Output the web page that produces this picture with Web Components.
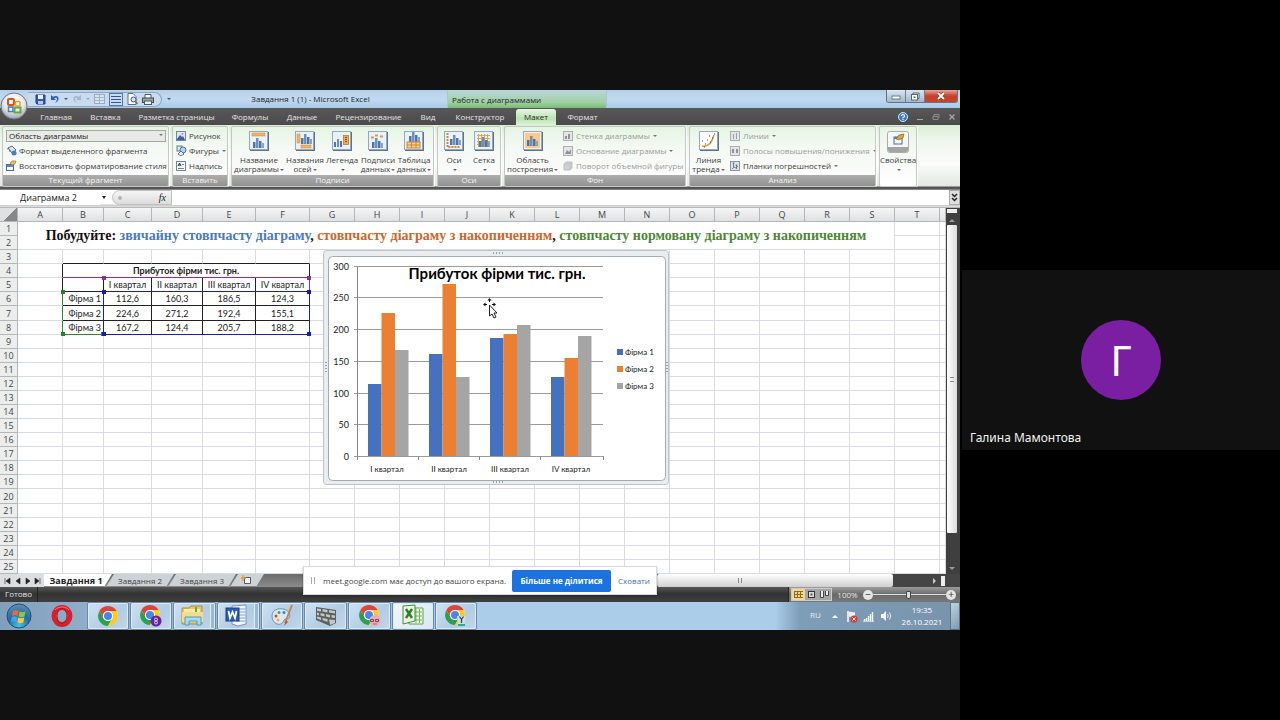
<!DOCTYPE html>
<html lang="uk">
<head>
<meta charset="utf-8">
<title>Завдання 1 (1) - Microsoft Excel</title>
<style>
html, body { margin: 0; height: 100%; background: #000; }
body { font-family: "Open Sans", "Noto Sans", sans-serif; font-size: 8px; overflow: hidden; }
</style>
</head>
<body>
<meet-call></meet-call>
<script>
const RESET = `
*, *::before, *::after { box-sizing: border-box; }
:host { display: block; box-sizing: border-box; }
button, input, select { font: inherit; color: inherit; margin: 0; padding: 0; border: 0; background: none; outline: 0; }
a { color: inherit; text-decoration: none; }
`;
function component(name, css, render) {
  customElements.define(name, class extends HTMLElement {
    constructor() {
      super();
      this.attachShadow({ mode: "open" });
    }
    connectedCallback() {
      this.shadowRoot.innerHTML = `<style>${RESET}${css}</style>${render(this)}`;
    }
  });
}

/* ---------- icons ---------- */
const frame = (inner, fill = "#e9f1fb") =>
  `<rect x="1" y="1" width="19" height="19" fill="#5f7388"/><rect x="0.5" y="0.5" width="18" height="18" fill="${fill}" stroke="#93a9c0"/>${inner}`;
const bars = (x, y) =>
  `<rect x="${x}" y="${y + 4}" width="2.5" height="6" fill="#4f74a8"/><rect x="${x + 3}" y="${y}" width="2.5" height="10" fill="#6c8fc0"/><rect x="${x + 6}" y="${y + 3}" width="2.5" height="7" fill="#4f74a8"/><rect x="${x + 9}" y="${y + 5}" width="2" height="5" fill="#86a3cc"/>`;
const grayThumb = inner => `<rect x="0.5" y="0.5" width="9" height="9" fill="#e4e6e8" stroke="#a9adb2"/>${inner}`;
const chrome = `<circle cx="11" cy="11" r="10" fill="#fff"/><path d="M2.34 6A10 10 0 0 1 19.66 6H11A5 5 0 0 0 6.6 13.4Z" fill="#dc4638"/><path d="M2.34 6A10 10 0 0 0 11 21L15.3 13.5A5 5 0 0 1 6.7 13.5Z" fill="#2e9f4f"/><path d="M19.66 6A10 10 0 0 1 11 21L15.3 13.5A5 5 0 0 0 11 6Z" fill="#fbcb1e"/><circle cx="11" cy="11" r="5" fill="#fff"/><circle cx="11" cy="11" r="4" fill="#4a86e8"/>`;
const ICONS = {
  office: [28, 28, `<defs><radialGradient id="g" cx=".5" cy=".3" r=".7"><stop offset="0" stop-color="#fff"/><stop offset=".6" stop-color="#e3e6ea"/><stop offset="1" stop-color="#9da4ac"/></radialGradient></defs><circle cx="14" cy="14" r="13" fill="url(#g)" stroke="#6f757c"/><rect x="8" y="7" width="6" height="6" rx="1" fill="none" stroke="#d9531e" stroke-width="2"/><rect x="15.500" y="9.500" width="4.500" height="4.500" rx="1" fill="#fff" stroke="#f0a21c" stroke-width="1.500"/><rect x="8.500" y="15" width="4.500" height="4.500" fill="#fff" stroke="#3d7cc9" stroke-width="1.500"/><rect x="14.500" y="15.500" width="6" height="5" fill="none" stroke="#67a93b" stroke-width="2"/>`],
  save: [11, 11, `<path d="M1 1h9v9H2L1 9Z" fill="#3a56a8" stroke="#223a80"/><rect x="3" y="1" width="5" height="4" fill="#e8eefc"/><rect x="3" y="7" width="5" height="3" fill="#b8c6ea"/>`],
  undo: [10, 10, `<path d="M1 1v5h5L4 4.300C7 2.500 8.500 5 5 9 10.500 6.500 9.500 0 3 2.800Z" fill="#2f5cc0"/>`],
  redo: [10, 10, `<path d="M9 1v5H4L6 4.300C3 2.500 1.500 5 5 9-.5 6.500.5 0 7 2.800Z" fill="#a3b6cb"/>`],
  table: [11, 10, `<rect x=".5" y=".5" width="10" height="9" fill="#dbe3ec" stroke="#9aabbd"/><path d="M1 3.500h9M1 6.500h9M5.500 1v8" stroke="#a5b4c6"/>`],
  lines: [14, 13, `<rect x=".5" y=".5" width="13" height="12" fill="#c7dbf1" stroke="#56779f"/><path d="M2 3.500h10M2 6.500h10M2 9.500h10" stroke="#35568d"/>`],
  preview: [11, 12, `<path d="M1 .5h5l3 3v8H1Z" fill="#fff" stroke="#5c6f86"/><circle cx="6.500" cy="6.500" r="2.500" fill="#cfe3f3" stroke="#3d5876"/><path d="M8.500 8.500 10.500 11" stroke="#9a6a2e" stroke-width="1.500"/>`],
  print: [12, 11, `<path d="M3 4V.500h6V4" fill="#fff" stroke="#4d5966"/><rect x=".5" y="4" width="11" height="4.500" fill="#9aa5b0" stroke="#3f4953"/><rect x="2.500" y="7" width="7" height="3.500" fill="#f3f3e2" stroke="#4d5966"/>`],
  help: [10, 10, `<circle cx="5" cy="5" r="4.500" fill="#3a78d6" stroke="#d4e4fa"/><path d="M3.500 4A1.500 1.500 0 1 1 5 5.500V6.300M5 7v1" fill="none" stroke="#fff" stroke-width="1.200"/>`],
  min: [8, 8, `<path d="M1 6.500h6" stroke="#a9a9a9"/>`],
  restore: [8, 8, `<path d="M1 3.500h5v3H1ZM2 3V1.500h5V5" fill="none" stroke="#8c8c8c"/>`],
  close: [8, 8, `<path d="m1.500 1.500 5 5m0-5-5 5" stroke="#a9a9a9" stroke-width="1.200"/>`],
  wmin: [10, 8, `<rect x="1" y="4" width="8" height="3" fill="#fff" stroke="#66788c"/>`],
  wmax: [10, 9, `<path d="M3 2.500V1h6v5.500H7.500" fill="#fff" stroke="#52657a"/><rect x="1.500" y="2.500" width="6" height="5.500" fill="#fff" stroke="#52657a"/><rect x="3.500" y="4.500" width="2" height="1.500" fill="#52657a"/>`],
  wclose: [10, 8, `<path d="m2 1 6 6m0-6L2 7" stroke="#7d2418" stroke-width="3"/><path d="m2 1 6 6m0-6L2 7" stroke="#fff" stroke-width="2"/>`],
  title: [20, 20, frame(`<rect x="3" y="2" width="13" height="3" fill="#f1b45c" stroke="#c98b36" stroke-width=".5"/>${bars(4, 7)}`)],
  axisTitle: [20, 20, frame(`<rect x="2" y="3" width="3" height="9" fill="#f1b45c" stroke="#c98b36" stroke-width=".5"/><rect x="6" y="14" width="10" height="3" fill="#f1b45c" stroke="#c98b36" stroke-width=".5"/>${bars(6, 3)}`)],
  legend: [20, 20, frame(`<g transform="translate(-2 2)"><rect x="4" y="9" width="2" height="5" fill="#4f74a8"/><rect x="7" y="6" width="2" height="8" fill="#6c8fc0"/><rect x="10" y="8" width="2" height="6" fill="#4f74a8"/></g><rect x="11.500" y="4.500" width="5" height="9" fill="#f1a952" stroke="#c07a28" stroke-width=".8"/><path d="M13 6.500h2M13 8.500h2M13 10.500h2" stroke="#7d4d14"/>`)],
  dataLabel: [20, 20, frame(`${bars(4, 7)}<path d="M3 6.500h3M7 4.500h3M12 5.500h3" stroke="#e09a3c" stroke-width="2"/>`)],
  dataTable: [20, 20, frame(`${bars(5, 1)}<rect x="3" y="11" width="13" height="6" fill="#f8cf8e" stroke="#c98b36"/><path d="M3 14h13M7.500 11v6M12 11v6" stroke="#c98b36"/>`)],
  axes: [20, 20, frame(`<path d="M3.500 2v14h13" fill="none" stroke="#d08a2c" stroke-width="2" stroke-dasharray="2 1"/>${bars(6, 4)}`)],
  grid: [20, 20, frame(`<path d="M3 4.500h13M3 7.500h13M3 10.500h13M3 13.500h13M4.500 3v13M7.500 3v13M10.500 3v13M13.500 3v13" stroke="#e0a64c"/>${bars(5, 6)}`)],
  plotArea: [20, 20, frame(`<rect x="2" y="2" width="15" height="15" fill="#f9cb86"/>${bars(4, 5)}`)],
  trend: [20, 20, frame(`<path d="M3 15C9 16 13 12 15 4" fill="none" stroke="#e3923a" stroke-width="1.500"/><path d="M3 10h1M6 13h1M8 9h1M11 11h1M13 7h1M10 5h1M15 3h1M5 16h1" stroke="#4a4a4a" stroke-width="1.200"/>`, "#fff")],
  props: [22, 22, `<rect x=".5" y=".5" width="21" height="21" rx="2" fill="#f6f8f6" stroke="#a9adaa"/><path d="M1 16h20v3a2 2 0 0 1-2 2H3a2 2 0 0 1-2-2Z" fill="#a2a5a3"/><rect x="7" y="6" width="8" height="7" fill="#fff" stroke="#4d6b8c"/><rect x="7" y="6" width="8" height="2" fill="#4f7fc2"/><path d="m9 8 3-4 5-1-1 4-4 2Z" fill="#d7a83a" stroke="#6b5a14" stroke-width=".6"/>`],
  format: [11, 11, `<path d="m2 3 4-2 4 4-4 3Z" fill="#dfe9f5" stroke="#4c6e98"/><path d="M1 4c2-1 3 0 3 3" fill="none" stroke="#4c6e98"/><circle cx="8" cy="8" r="2.500" fill="#4b7dc6"/>`],
  resetStyle: [11, 11, `<rect x=".5" y="4.500" width="7" height="6" fill="#fff" stroke="#43699a"/><rect x="1" y="5" width="6" height="2" fill="#5a8bd0"/><path d="M4 3 6 1h4L9 4 6 5Z" fill="#f0c04c" stroke="#9a7320" stroke-width=".6"/>`],
  picture: [10, 10, `<rect x=".5" y=".5" width="9" height="9" fill="#d7e6f8" stroke="#7087a5"/><path d="m1 8 3-4 2 2 1-1 2 4H1Z" fill="#3e5f8f"/><circle cx="6.500" cy="3" r="1" fill="#e98e3c"/>`],
  shapes: [11, 11, `<rect x="1" y="1" width="5" height="5" fill="#dbe7f6" stroke="#5d7ba3"/><circle cx="7" cy="5" r="3" fill="#b9d1ee" stroke="#4d71a4"/><path d="m5 6 3 3-3 2-3-2Z" fill="#e9f1fb" stroke="#4d71a4"/>`],
  textbox: [10, 10, `<rect x=".5" y=".5" width="9" height="9" fill="#f4f8fd" stroke="#7087a5"/><path d="m2 5 1.500-3L5 5M2.500 4h2" fill="none" stroke="#24344d"/><path d="M6 3.500h2M2 7.500h6" stroke="#7087a5"/>`],
  wall: [10, 10, grayThumb(`<path d="M2 8V5h2v3ZM5 8V3h2v5Z" fill="#8d9196"/>`)],
  floor: [10, 10, grayThumb(`<path d="M2 8 4 4l2 2 2-3v5Z" fill="#8d9196"/>`)],
  cube: [10, 10, `<path d="m1 3 2-2h6v6L7 9H1Z" fill="#cfd2d4" stroke="#b1b4b7" stroke-width=".8"/><path d="M1 3h6v6M7 3l2-2" fill="none" stroke="#bcbfc2" stroke-width=".8"/>`],
  linesG: [10, 10, grayThumb(`<path d="M3.500 8V3M6.500 8V2" stroke="#9b9fa3"/>`)],
  updown: [10, 10, grayThumb(`<rect x="2" y="3" width="2" height="4" fill="#8f9398"/><rect x="6" y="3" width="2" height="4" fill="#8f9398"/>`)],
  error: [10, 10, `<rect x=".5" y=".5" width="9" height="9" fill="#dde3ea" stroke="#8a97a6"/><path d="M3.500 2v4M2.500 2h2M6.500 4v4M5.500 4h2M2 8l2-2 2 1 2-2" fill="none" stroke="#5c6773" stroke-width=".8"/>`],
  newSheet: [12, 10, `<path d="M3.500 2.500h6v6h-6Z" fill="#fff" stroke="#4a5f7c"/><path d="M2 0v6M0 3h5" stroke="#e3a02c" stroke-width="1.500"/>`],
  start: [28, 28, `<defs><radialGradient id="s" cx=".5" cy=".9" r=".9"><stop offset="0" stop-color="#49c4ea"/><stop offset=".5" stop-color="#1f6da6"/><stop offset="1" stop-color="#5f8eb4"/></radialGradient></defs><circle cx="14" cy="14" r="12" fill="url(#s)" stroke="#244e70"/><path d="M8 9c2-1 4-1 5.500.200L12.500 14C11 13 9 13 7 14Z" fill="#ee6a33"/><path d="M14.500 9.500c2 1 4 1 6 0l-1 5c-2 1-4 1-6-.2Z" fill="#95c43d"/><path d="M6.800 15c2-1 4-1 5.500.2l-1 4.800c-1.500-1-3.500-1-5.500 0Z" fill="#4ba0e0"/><path d="M13.300 15.500c2 1 4 1 6 0l-1 5c-2 1-4 1-6-.2Z" fill="#fbc93c"/>`],
  opera: [22, 22, `<ellipse cx="11" cy="11" rx="8" ry="8.500" fill="none" stroke="#d8202c" stroke-width="5"/><ellipse cx="11" cy="11" rx="5" ry="7.500" fill="none" stroke="#b41420" stroke-width="1"/><path d="M4 5c3-4 11-4 14 0" fill="none" stroke="#f0767c" stroke-width="1"/>`],
  chrome: [22, 22, chrome],
  chromeS: [24, 24, `${chrome}<circle cx="17" cy="17" r="5.500" fill="#6a1f9c"/><circle cx="17" cy="15.500" r="1.500" fill="none" stroke="#e4d0f0"/><circle cx="17" cy="18.500" r="1.500" fill="none" stroke="#e4d0f0"/>`],
  chromeP: [24, 24, `${chrome}<circle cx="17" cy="16.500" r="5.500" fill="#f0a9b8"/><path d="M12.500 15.500h3v2h-3ZM17.500 15.500h3v2h-3Z" fill="none" stroke="#4d333a" stroke-width=".8"/><path d="M15 20h4" stroke="#c95a70"/>`],
  chromeY: [24, 24, `${chrome}<path d="M13 12h9l-1 8h-7Z" fill="#c8dde6"/><path d="m15.500 12.500 2 3 2-3M17.500 15v4" fill="none" stroke="#3d3a38" stroke-width="1.200"/><path d="M14 20h7v2h-7Z" fill="#2ea6a0"/>`],
  folder: [24, 24, `<path d="M1 4h7l2-2h11v18H1Z" fill="#e5c565" stroke="#b18f38"/><path d="M3 5h16v9H3Z" fill="#f8eaa8"/><path d="M14 3h2v6h-2Z" fill="#62a65a"/><path d="M1 8h21v10H1Z" fill="#f5dc88"/><path d="M4 13h16v8h-4v-4H8v4H4Z" fill="#a7dbf2" stroke="#4d9cc2"/>`],
  word: [24, 24, `<path d="M7 2 21 1v19l-8 2-6-2Z" fill="#f3f6fb" stroke="#7e95b5"/><path d="M14 5h6M14 8h6M14 11h6M14 14h6M11 17h9" stroke="#7fa0d0"/><rect x="1" y="4" width="13" height="13" fill="#2b5fae" stroke="#17407e"/><path d="m3.500 7 1.500 7 2.500-6L10 14l1.500-7" fill="none" stroke="#fff" stroke-width="1.800"/>`],
  paint: [24, 24, `<path d="M2 12C2 6 8 4 13 5c6 1 8 6 6 9-2 2-4 0-5 2-1 3-3 5-7 4-3-1-5-4-5-8Z" fill="#dbe9f4" stroke="#6c93b8"/><circle cx="6" cy="12" r="1.500" fill="#d8442f"/><circle cx="9" cy="8.500" r="1.500" fill="#4da64a"/><circle cx="14" cy="8.500" r="1.500" fill="#3f7cd0"/><circle cx="8" cy="16" r="1.500" fill="#f0b63a"/><path d="M22 1 15 19" stroke="#c98446" stroke-width="2"/><path d="m16 16-2 6 4-4Z" fill="#b2603a"/>`],
  bricks: [24, 24, `<path d="m2 3 20 3v13l-6 3-14-6Z" fill="#5b5f5e"/><path d="m3 4.500 4 .500v2.500l-4-.5ZM8.500 5l5 1v2.500l-5-1ZM15 6l6 1v2.500l-6-1ZM3 8.500l2 .5v2.500l-2-.5ZM6.500 9l4 1v2.500l-4-1ZM12 10l4 1v2.500l-4-1ZM17.500 11l3.500.5V14l-3.500-.5ZM3 12.500l4 1V16l-4-1.500ZM8.500 14l5 1v3l-5-2ZM15 15.500l6 .5v3l-5 2Z" fill="#c3c8c4"/>`],
  excel: [24, 24, `<path d="M8 4h14v16H8Z" fill="#f5fbf2" stroke="#5f9f4d"/><path d="M10 8h11M10 12h11M10 16h11M15 5v14M18.500 5v14" stroke="#6fb35b"/><path d="M2 2 14 1v16L2 20Z" fill="#e9f6e4" stroke="#3f8f34"/><path d="m5 5 6 9M11 5l-6 9" stroke="#2d8126" stroke-width="2.500"/>`],
  flag: [12, 13, `<path d="M2 1v11" stroke="#fff" stroke-width="1.500"/><path d="M3 2c2-1 4 1 6 0v5c-2 1-4-1-6 0Z" fill="#e9eff3"/><circle cx="8" cy="9" r="3.500" fill="#d63b2d"/><path d="m6.500 7.500 3 3m0-3-3 3" stroke="#fff"/>`],
  signal: [12, 11, `<path d="M1.500 10V8M3.500 10V7M5.500 10V5M7.500 10V3M9.500 10V1" stroke="#fff" stroke-width="1.400"/><path d="M0 10.500h11" stroke="#dce6ee" stroke-width=".8"/>`],
  sound: [12, 12, `<path d="M1 4h2l3-3v10L3 8H1Z" fill="#fff"/><path d="M7.500 4q1.500 2 0 4M9.500 2.500q2.500 3.500 0 7" fill="none" stroke="#e6eef4"/>`],
  move: [14, 22, `<path d="M6.500 1v3M6.500 9v3M1 6.500h3M9 6.500h3" stroke="#000"/><path d="m6.500 0 2 2.500h-4ZM0 6.500 2.500 4.500v4ZM13 6.500l-2.500-2v4Z" fill="#111"/><path d="M6.500 7v11l2.500-2 2 4 2-1-2-4h3Z" fill="#fff" stroke="#222"/>`]
};
component("ui-icon", `:host { display: inline-block; flex: none; line-height: 0; } svg { display: block; }`, el => {
  const [w, h, body] = ICONS[el.getAttribute("name")];
  return `<svg width="${w}" height="${h}" viewBox="0 0 ${w} ${h}" aria-hidden="true">${body}</svg>`;
});
const icon = n => `<ui-icon name="${n}"></ui-icon>`;

/* ---------- call layout ---------- */
component("meet-call", `
:host { display: grid; grid-template-columns: 3fr 1fr; min-height: 100vh; align-items: stretch; }
main { background: #111; display: flex; flex-direction: column; justify-content: center; min-width: 0; }
aside { background: #000; display: flex; flex-direction: column; justify-content: center; padding-left: 2px; min-width: 0; }
`, () => `<main><shared-screen></shared-screen></main><aside><participant-tile initial="Г">Галина Мамонтова</participant-tile></aside>`);

component("participant-tile", `
:host { display: grid; grid-template-rows: 1fr auto 1fr; justify-items: center; height: 180px; background: #111; color: #f1f1f1; }
.avatar { grid-row: 2; width: 80px; height: 80px; border-radius: 50%; background: #7b1fa2; color: #fff; font: 42px/80px "Noto Sans", sans-serif; text-align: center; }
.name { grid-row: 3; justify-self: start; align-self: end; padding: 0 8px 3px; font: 12px/18px "Noto Sans", sans-serif; }
`, el => `<div class="avatar">${el.getAttribute("initial")}</div><div class="name"><slot></slot></div>`);

component("shared-screen", `:host { position: relative; background: #555; color: #333; overflow: hidden; }`, () => `
<title-bar></title-bar><ribbon-tabs></ribbon-tabs><ribbon-bar></ribbon-bar><formula-bar></formula-bar>
<sheet-view></sheet-view><sheet-tabs></sheet-tabs><status-bar></status-bar><task-bar></task-bar><share-notice></share-notice>`);

/* ---------- title bar ---------- */
component("title-bar", `
:host { height: 18px; display: flex; align-items: center; position: relative; background: linear-gradient(#b3cfea, #c2daf0 50%, #a9cae8); color: #222; }
.office { position: absolute; left: 0; top: 2px; z-index: 2; }
.qat { margin-left: 28px; width: 134px; height: 15px; padding-left: 7px; display: flex; align-items: center; gap: 4px; border: 1px solid #8fa6be; border-left: 0; border-radius: 0 8px 8px 0; background: #c9dcef; }
.caret { width: 0; border: 2px solid transparent; border-top: 2px solid #46586d; border-bottom: 0; }
.more { margin-left: 5px; }
h1 { margin: 0; font: 8px/18px "Open Sans", sans-serif; width: 276px; padding-left: 3px; text-align: center; white-space: nowrap; }
.context { width: 160px; align-self: stretch; padding-left: 4px; line-height: 19px; background: linear-gradient(#bad6dc, #9fd0a2 70%, #79bb73); border-left: 1px solid #a9c8c8; border-right: 1px solid #a9c8c8; }
.win { margin-left: auto; margin-right: 2px; align-self: flex-start; display: flex; border: 1px solid #5f7589; border-top: 0; border-radius: 0 0 3px 3px; overflow: hidden; }
.win button { height: 12px; width: 19px; display: grid; place-items: center; background: linear-gradient(#d9e6f2, #a3b8cc); border-right: 1px solid #6d8195; }
.win button:last-child { width: 32px; border: 0; background: linear-gradient(#e5a79c, #c63f2a 50%, #c9422e); }
`, () => `<button class="office" aria-label="Office">${icon("office")}</button>
<div class="qat">${["save", "undo"].map(icon).join("")}<i class="caret"></i>${icon("redo")}<i class="caret" style="opacity:.4"></i>${["table", "lines", "preview", "print"].map(icon).join("")}</div>
<i class="caret more"></i><h1>Завдання 1 (1) - Microsoft Excel</h1><div class="context">Работа с диаграммами</div>
<div class="win"><button aria-label="Згорнути">${icon("wmin")}</button><button aria-label="Відновити">${icon("wmax")}</button><button aria-label="Закрити">${icon("wclose")}</button></div>`);

/* ---------- ribbon ---------- */
const TABS = [["Главная", 50], ["Вставка", 49], ["Разметка страницы", 93], ["Формулы", 54], ["Данные", 50], ["Рецензирование", 83], ["Вид", 36], ["Конструктор", 68], ["Макет", 44], ["Формат", 49]];
component("ribbon-tabs", `
:host { height: 17px; display: flex; align-items: stretch; padding-left: 31px; background: linear-gradient(#585858, #4a4a4a); color: #e4e4e4; }
nav { display: flex; align-items: stretch; }
button { flex: none; line-height: 16px; text-align: center; white-space: nowrap; }
button[aria-selected=true] { margin: 1px 2px 0; border-radius: 3px 3px 0 0; color: #222; background: linear-gradient(#eaf6e6, #b9e3af 60%, #dcf2d8); }
.end { margin-left: auto; display: flex; align-items: center; gap: 8px; padding-right: 4px; }
`, () => `<nav role="tablist">${TABS.map(([t, w]) => `<button role="tab" aria-selected="${t === "Макет"}" style="width:${t === "Макет" ? w - 4 : w}px">${t}</button>`).join("")}</nav>
<div class="end">${["help", "min", "restore", "close"].map(icon).join("")}</div>`);

component("ribbon-group", `
:host { flex: none; height: 61px; display: flex; flex-direction: column; border: 1px solid #c3c8c3; border-radius: 2px; background: linear-gradient(#e6f5e3, #f4f9f3 35%, #fafbfa 75%, #fff); overflow: hidden; box-shadow: 1px 0 0 #fff; }
.body { flex: 1; display: flex; align-items: flex-start; }
footer { height: 11px; line-height: 10px; text-align: center; color: #f4f4f4; background: linear-gradient(#adadad, #929292); }
`, el => `<div class="body"><slot></slot></div>${el.hasAttribute("label") ? `<footer>${el.getAttribute("label")}</footer>` : ""}`);

component("ribbon-large", `
:host { flex: none; }
button { width: 100%; display: flex; flex-direction: column; align-items: center; padding-top: 4px; line-height: 9px; white-space: nowrap; }
ui-icon { height: 24px; }
.arrow { display: inline-block; border: 2px solid transparent; border-top-color: #666; border-bottom: 0; vertical-align: middle; margin-left: 1px; }
`, el => `<button>${icon(el.getAttribute("icon"))}<span>${el.getAttribute("top")}</span><span>${el.getAttribute("bottom") || ""}<i class="arrow"></i></span></button>`);

component("ribbon-small", `
:host { height: 15px; }
:host([disabled]) { color: #9a9c9a; }
button { display: flex; align-items: center; gap: 3px; height: 15px; white-space: nowrap; }
ui-icon { width: 10px; }
.arrow { border: 2px solid transparent; border-top-color: #777; border-bottom: 0; }
`, el => `<button ${el.hasAttribute("disabled") ? "disabled" : ""}>${icon(el.getAttribute("icon"))}<span><slot></slot></span>${el.hasAttribute("menu") ? `<i class="arrow"></i>` : ""}</button>`);

component("ribbon-bar", `
:host { height: 65px; display: flex; align-items: flex-start; gap: 3px; padding: 1px 1px 0 2px; background: linear-gradient(#d9edd5, #edf5eb 20%, #fbfcfb 60%, #e4e7e4 61px, #505050 62px, #5a5a5a 64px, #aaa); color: #3c3c3c; }
.stack { display: flex; flex-direction: column; padding: 1px 0 0 3px; }
.pick { position: relative; width: 160px; height: 15px; display: flex; align-items: center; }
.pick::after { content: ""; position: absolute; right: 3px; top: 6px; border: 2px solid transparent; border-top-color: #777; }
select { appearance: none; width: 100%; height: 12px; padding-left: 2px; line-height: 10px; border: 1px solid #a3a8a3; background: #e6ebe6; color: #222; }
`, () => `
<ribbon-group label="Текущий фрагмент" style="width:167px"><div class="stack">
 <label class="pick"><select aria-label="Элемент диаграммы"><option>Область диаграммы</option></select></label>
 <ribbon-small icon="format">Формат выделенного фрагмента</ribbon-small><ribbon-small icon="resetStyle">Восстановить форматирование стиля</ribbon-small></div></ribbon-group>
<ribbon-group label="Вставить" style="width:56px"><div class="stack"><ribbon-small icon="picture">Рисунок</ribbon-small><ribbon-small icon="shapes" menu>Фигуры</ribbon-small><ribbon-small icon="textbox">Надпись</ribbon-small></div></ribbon-group>
<ribbon-group label="Подписи" style="width:203px">
 <ribbon-large style="width:54px" icon="title" top="Название" bottom="диаграммы"></ribbon-large><ribbon-large style="width:38px" icon="axisTitle" top="Названия" bottom="осей"></ribbon-large><ribbon-large style="width:36px" icon="legend" top="Легенда"></ribbon-large><ribbon-large style="width:36px" icon="dataLabel" top="Подписи" bottom="данных"></ribbon-large><ribbon-large style="width:36px" icon="dataTable" top="Таблица" bottom="данных"></ribbon-large></ribbon-group>
<ribbon-group label="Оси" style="width:64px"><ribbon-large style="width:32px" icon="axes" top="Оси"></ribbon-large><ribbon-large style="width:28px" icon="grid" top="Сетка"></ribbon-large></ribbon-group>
<ribbon-group label="Фон" style="width:182px"><ribbon-large style="width:55px" icon="plotArea" top="Область" bottom="построения"></ribbon-large>
 <div class="stack"><ribbon-small icon="wall" disabled menu>Стенка диаграммы</ribbon-small><ribbon-small icon="floor" disabled menu>Основание диаграммы</ribbon-small><ribbon-small icon="cube" disabled>Поворот объемной фигуры</ribbon-small></div></ribbon-group>
<ribbon-group label="Анализ" style="width:187px"><ribbon-large style="width:37px" icon="trend" top="Линия" bottom="тренда"></ribbon-large>
 <div class="stack"><ribbon-small icon="linesG" disabled menu>Линии</ribbon-small><ribbon-small icon="updown" disabled menu>Полосы повышения/понижения</ribbon-small><ribbon-small icon="error" menu>Планки погрешностей</ribbon-small></div></ribbon-group>
<ribbon-group style="width:38px"><ribbon-large style="width:36px" icon="props" top="Свойства"></ribbon-large></ribbon-group>`);

/* ---------- formula bar ---------- */
component("formula-bar", `
:host { height: 18px; display: flex; padding-bottom: 3px; background: linear-gradient(#fff 14px, #c9c9c9 15px, #e2e2e2 17px, #8e8e8e); color: #222; }
.name { width: 100px; padding-left: 20px; font-size: 9px; background: #fff; }
.caret { align-self: center; border: 2px solid transparent; border-top: 3px solid #222; border-bottom: 0; margin: 0 6px 0 2px; }
.fx { width: 60px; display: flex; justify-content: space-between; align-items: center; padding: 0 5px; border: 1px solid #c0c0c0; border-radius: 8px 0 0 8px; background: linear-gradient(#f5f5f5, #dcdcdc); font: italic 10px/13px "Liberation Serif", serif; }
.knob { width: 4px; height: 4px; border-radius: 50%; background: #b5b5b5; }
.formula { flex: 1; min-width: 0; background: #fff; }
.expand { width: 11px; background: #dedede; border: 1px solid #aaa; line-height: 0; display: grid; place-items: center; }
`, () => `<input class="name" aria-label="Ім'я" value="Диаграмма 2"><i class="caret"></i><div class="fx"><i class="knob"></i><span>fx</span></div><input class="formula" aria-label="Формула"><button class="expand" aria-label="Розгорнути"><svg width="7" height="9" viewBox="0 0 7 9"><path d="m1 1 2.500 2.500L6 1M1 5l2.500 2.500L6 5" fill="none" stroke="#222" stroke-width="1.500"/></svg></button>`);

/* ---------- worksheet ---------- */
const COLS = "ABCDEFGHIJKLMNOPQRST".split("");
const WIDTHS = [18, 45, 41, 48, 51, 53, 54, ...Array(14).fill(45)];
const FIRMS = [["Фірма 1", 112.6, 160.3, 186.5, 124.3], ["Фірма 2", 224.6, 271.2, 192.4, 155.1], ["Фірма 3", 167.2, 124.4, 205.7, 188.2]];
const QUARTERS = ["I квартал", "II квартал", "III квартал", "IV квартал"];
const num = v => String(v).replace(".", ",");
function cells(r) {
  const empty = n => "<td></td>".repeat(n);
  if (r === 1) return `<td class="task" colspan="19" rowspan="2">Побудуйте: <span class="c1">звичайну стовпчасту діаграму</span>, <span class="c2">стовпчасту діаграму з накопиченням</span>, <span class="c3">стовпчасту нормовану діаграму з накопиченням</span></td>` + empty(2);
  if (r === 2) return empty(2);
  if (r === 3) return "<td></td>" + `<td class="edge"></td>`.repeat(5) + empty(15);
  if (r === 4) return `<td class="k"></td><td class="d head" colspan="5">Прибуток фірми тис. грн.</td>` + empty(15);
  if (r === 5) return `<td class="k"></td><td class="d"></td>` + QUARTERS.map((q, i) => `<td class="d q${i}">${q}${i === 0 ? '<i class="h tl p"></i>' : i === 3 ? '<i class="h tr p"></i>' : ""}</td>`).join("") + empty(15);
  if (r >= 6 && r <= 8) {
    const f = FIRMS[r - 6], last = r === 8;
    return `<td class="k kg"></td><td class="d name n${r}">${f[0]}${r === 6 ? '<i class="h tl g"></i>' : last ? '<i class="h bl g"></i><i class="h br g"></i>' : ""}</td>` +
      f.slice(1).map((v, i) => `<td class="d v${i} ${last ? "vl" : ""}">${num(v)}${i === 0 && r === 6 ? '<i class="h tl b"></i>' : i === 3 && r === 6 ? '<i class="h tr b"></i>' : i === 0 && last ? '<i class="h bl b"></i>' : i === 3 && last ? '<i class="h br b"></i>' : ""}</td>`).join("") + empty(15);
  }
  return empty(21);
}
component("sheet-view", `
:host { display: flex; position: relative; background: #fff; }
.sheet { flex: 1; min-width: 0; overflow: hidden; }
table { table-layout: fixed; width: 100%; height: 366px; border-collapse: separate; border-spacing: 0; font: 9px/12px Lato, "Open Sans", sans-serif; color: #222; }
th, td { padding: 0; height: 14px; border-right: 1px solid #d9dce0; border-bottom: 1px solid #d9dce0; text-align: center; white-space: nowrap; }
th { font: 9px/12px "Open Sans", sans-serif; color: #444; background: linear-gradient(#f5f5f5, #e0e1e2); border-color: #b4b7ba; }
tbody th { background: #eceeed; }
tbody th, tbody td { padding-top: 1px; }
td { position: relative; }
.corner { background: linear-gradient(135deg, #dfe1e3 55%, #888 55%); }
.task { font: bold 14px/26px "Liberation Serif", serif; color: #111; }
.c1 { color: #4a7abf; } .c2 { color: #c8682c; } .c3 { color: #4c8733; }
.edge, .d { border-bottom-color: #222; }
.k, .d { border-right-color: #222; }
.kg { border-right-color: #2a8a2e; }
.head { font-weight: bold; border-bottom-color: #8a2f9e; }
.q0, .q1, .q2, .q3 { border-bottom-color: #1a1fae; }
.q3 { border-right-color: #8a2f9e; }
.v3 { border-right-color: #1a1fae; } .vl { border-bottom-color: #1a1fae; }
.name { text-align: right; padding-right: 2px; border-right-color: #1a1fae; } .n8 { border-bottom-color: #2a8a2e; }
.h { position: absolute; width: 4px; height: 4px; z-index: 1; }
.tl { left: -2px; top: -2px; } .tr { right: -2px; top: -2px; } .bl { left: -2px; bottom: -2px; } .br { right: -2px; bottom: -2px; }
.p { background: #8a2f9e; } .g { background: #228428; } .b { background: #1519c8; }
.scroll { width: 14px; background: #3f3f3f; display: flex; flex-direction: column; align-items: center; gap: 3px; padding: 1px 3px 4px 1px; }
.split { width: 10px; height: 4px; background: #eee; }
.thumb { width: 10px; flex: 0 0 308px; border-radius: 1px; background: linear-gradient(90deg, #fff, #dadada); display: grid; place-items: center; }
.thumb::after { content: ""; width: 4px; height: 5px; border: 1px solid #888; border-width: 1px 0; }
.up, .down { border: 3px solid transparent; }
.up { border-bottom-color: #999; border-top: 0; margin-top: 3px; } .down { border-top-color: #999; border-bottom: 0; margin-top: auto; }
column-chart { position: absolute; left: 323px; top: 42px; }
.cursor { position: absolute; left: 483px; top: 90px; z-index: 3; }
`, () => `<div class="sheet"><table><colgroup>${WIDTHS.map(w => `<col style="width:${w}px">`).join("")}<col></colgroup>
<thead><tr><th class="corner"></th>${COLS.map(c => `<th scope="col">${c}</th>`).join("")}<th></th></tr></thead>
<tbody>${Array.from({ length: 25 }, (_, i) => `<tr><th scope="row">${i + 1}</th>${cells(i + 1)}</tr>`).join("")}</tbody></table></div>
<div class="scroll"><i class="split"></i><i class="up"></i><div class="thumb"></div><i class="down"></i></div>
<column-chart></column-chart><div class="cursor">${icon("move")}</div>`);

/* ---------- chart ---------- */
component("column-chart", `
:host { width: 347px; height: 235px; }
svg { display: block; font-family: Lato, "Open Sans", sans-serif; font-size: 9px; fill: #222; }
.small { font-size: 8px; }
.title { font-size: 15px; font-weight: bold; fill: #000; }
`, () => {
  const colors = ["#4472c0", "#eb8032", "#a5a5a5"];
  const x0 = 34, y0 = 206, step = 61, unit = 0.635;
  let s = `<rect x=".5" y=".5" width="345" height="234" rx="3" fill="#e9edf0" stroke="#bcc4ca"/><rect x="5.500" y="6.500" width="337" height="224" rx="4" fill="#fff" stroke="#a4abb0"/>`;
  for (const y of [3, 232]) s += `<path d="M170 ${y}h11" stroke="#9aa1a7" stroke-width="2" stroke-dasharray="1 2"/>`;
  for (const x of [3, 344]) s += `<path d="M${x} 112v11" stroke="#9aa1a7" stroke-width="2" stroke-dasharray="1 2"/>`;
  for (let v = 0; v <= 300; v += 50) {
    const y = Math.round(y0 - v * unit) + 0.5;
    s += `<path d="M${x0 - 3} ${y}H280" stroke="#9b9b9b"/><text x="26" y="${y + 3}" text-anchor="end">${v}</text>`;
  }
  QUARTERS.forEach((q, i) => {
    FIRMS.forEach((f, j) => {
      const h = Math.round(f[i + 1] * unit);
      s += `<rect x="${x0 + 11 + i * step + j * 13.5}" y="${y0 - h}" width="13.500" height="${h}" fill="${colors[j]}"/>`;
    });
    s += `<text class="small" x="${64 + i * step + (i > 0 ? 1 : 0)}" y="222" text-anchor="middle">${q}</text>`;
  });
  for (let i = 0; i <= 4; i++) s += `<path d="M${x0 + 0.5 + i * step + (i === 4 ? 2 : 0)} 206v4" stroke="#888"/>`;
  s += `<path d="M${x0 + 0.5} 16V206" stroke="#888"/>`;
  FIRMS.forEach((f, j) => {
    s += `<rect x="294" y="${99 + j * 17}" width="6" height="6" fill="${colors[j]}"/><text class="small" x="302" y="${105 + j * 17}">${f[0]}</text>`;
  });
  s += `<text class="title" x="174" y="29" text-anchor="middle">Прибуток фірми тис. грн.</text>`;
  return `<svg width="347" height="235" viewBox="0 0 347 235" role="img" aria-label="Стовпчаста діаграма">${s}</svg>`;
});

/* ---------- sheet tabs, status bar ---------- */
component("sheet-tabs", `
:host { height: 13px; display: flex; background: linear-gradient(#6b6b6b, #8b8b8b); line-height: 13px; }
.nav { width: 44px; display: flex; justify-content: space-around; align-items: center; background: #dcdfe0; }
.tabs { display: flex; }
.tabs button { flex: none; text-align: center; background: #cdd2d6; color: #444; clip-path: polygon(8px 0, 100% 0, calc(100% - 8px) 100%, 0 100%); margin-right: -6px; border-bottom: 1px solid #888; }
.tabs button + button { width: 68px; }
.tabs button:first-child { width: 68px; padding-right: 4px; font-size: 9px; color: #222; font-weight: bold; background: #fff; clip-path: polygon(0 0, 100% 0, calc(100% - 8px) 100%, 0 100%); }
.tabs button:last-child { width: 34px; display: grid; place-items: center; }
.scroll { margin-left: auto; display: flex; width: 303px; background: #454545; align-items: center; }
.thumb { flex: 0 0 236px; align-self: stretch; background: linear-gradient(#fff, #cfcfcf); border-radius: 2px; display: flex; align-items: center; justify-content: flex-end; padding-right: 151px; }
.thumb::after { content: ""; width: 4px; height: 5px; border: 1px solid #888; border-width: 0 1px; }
.right { margin-left: auto; border: 3px solid transparent; border-left-color: #ccc; border-right: 0; }
.split { width: 4px; height: 10px; background: #eee; margin: 0 15px 0 5px; }
`, () => `<div class="nav"><svg width="40" height="8" viewBox="0 0 40 8"><path d="M3 1v6M8 1 4 4l4 3ZM18 1l-4 3 4 3ZM24 1l4 3-4 3ZM33 1l4 3-4 3ZM38 1v6" fill="#222" stroke="#222" stroke-width=".6"/></svg></div>
<div class="tabs"><button>Завдання 1</button><button>Завдання 2</button><button>Завдання 3</button><button aria-label="Новий аркуш">${icon("newSheet")}</button></div>
<div class="scroll"><div class="thumb"></div><i class="right"></i><i class="split"></i></div>`);

component("status-bar", `
:host { height: 15px; display: flex; align-items: stretch; background: linear-gradient(#565656, #333 45%, #3e3e3e); color: #e6e6e6; line-height: 14px; }
.ready { width: 38px; padding-left: 5px; border-right: 1px solid #222; }
.tools { margin-left: auto; width: 172px; display: flex; align-items: center; padding-left: 2px; background: linear-gradient(#9b9b9b, #6a6a6a 50%, #777); border-left: 1px solid #222; }
.views { display: flex; border: 1px solid #ccc; }
.views button { width: 13px; height: 11px; display: grid; place-items: center; background: #a5a5a5; }
.views button:first-child { background: #f7d689; }
.pct { width: 31px; text-align: center; }
.round { width: 10px; height: 10px; border-radius: 50%; background: #e5e5e5; color: #333; font-size: 10px; line-height: 9px; text-align: center; }
input { appearance: none; width: 73px; height: 10px; background: linear-gradient(transparent 4px, #ddd 4px, #ddd 5px, transparent 5px); }
input::-webkit-slider-thumb { appearance: none; width: 5px; height: 8px; background: #ddd; border: 1px solid #444; border-radius: 0 0 2px 2px; }
`, () => `<div class="ready">Готово</div><div class="tools"><div class="views">
<button aria-label="Обычный"><svg width="9" height="7"><path d="M0 .5h9M0 3.500h9M0 6.500h9M.5 0v7M3.500 0v7M6.500 0v7" stroke="#8a6a2a"/></svg></button>
<button aria-label="Разметка"><svg width="7" height="7"><rect x=".5" y=".5" width="6" height="6" fill="#ddd" stroke="#333"/><rect x="2.500" y="2.500" width="2" height="2" fill="#555"/></svg></button>
<button aria-label="Страничный"><svg width="9" height="7"><path d="M.5 0v6.500h3V0M5.500 0v4.500h3V0" fill="#eee" stroke="#444"/></svg></button></div>
<span class="pct">100%</span><button class="round" aria-label="Уменьшить">−</button><input type="range" min="0" max="100" value="49" aria-label="Масштаб"><button class="round" aria-label="Увеличить">+</button></div>`);

/* ---------- taskbar ---------- */
const TASKS = [["chrome", 42], ["chromeS", 42], ["folder", 43], ["word", 43], ["paint", 42], ["bricks", 43], ["chromeP", 43], ["excel", 42], ["chromeY", 42]];
component("task-bar", `
:host { height: 28px; display: flex; align-items: stretch; background: linear-gradient(90deg, #809fbb, #8fadc8 80px, #abcde9 480px, #abcde9 775px, #7e9db7 800px, #7894ac); color: #fff; }
.pin { flex: none; width: 37px; display: grid; place-items: center; }
.opera { width: 49px; }
.task { flex: none; display: grid; place-items: center; margin-left: 1px; border: 1px solid #6a89a6; border-radius: 2px; background: linear-gradient(135deg, #cfe1f1, #b1cce4 60%, #c3d8ea); box-shadow: inset 0 0 0 1px #dceaf5; }
.task.stack { padding-right: 4px; box-shadow: inset 0 0 0 1px #dceaf5, inset -4px 0 0 #9bb9d3, inset -5px 0 0 #e1edf6; }
.task.active { background: linear-gradient(135deg, #f1f7fc, #d8e8f4); }
.tray { margin-left: auto; display: flex; align-items: center; }
.lang { width: 22px; margin-bottom: 4px; color: #e6eef4; }
.tri { border: 3px solid transparent; border-bottom-color: #fff; border-top: 0; margin-right: 8px; }
.tray ui-icon { margin-right: 5px; }
.clock { width: 46px; margin: 0 5px 0 2px; text-align: center; line-height: 12px; }
.desk { width: 10px; align-self: stretch; border: 1px solid #57738b; background: linear-gradient(135deg, #c0d2e0, #7d9ab2); }
`, () => `<button class="pin" aria-label="Пуск">${icon("start")}</button><button class="pin opera" aria-label="Opera">${icon("opera")}</button>
${TASKS.map(([n, w]) => `<button class="task ${n === "excel" ? "active" : ""} ${n === "folder" || n === "word" ? "stack" : ""}" style="width:${w}px" aria-label="${n}">${icon(n)}</button>`).join("")}
<div class="tray"><span class="lang">RU</span><i class="tri"></i>${["flag", "signal", "sound"].map(icon).join("")}<div class="clock">19:35<br>26.10.2021</div><button class="desk" aria-label="Робочий стіл"></button></div>`);

component("share-notice", `
:host { position: absolute; left: 303px; bottom: 35px; width: 354px; height: 29px; display: flex; align-items: center; background: #fff; border: 1px solid #d8dadc; color: #444; box-shadow: 0 1px 2px #0005; }
.grip { width: 4px; height: 7px; border: 1px solid #aaa; border-width: 0 1px; margin: 0 8px 0 7px; }
.msg { width: 189px; font-size: 8px; white-space: nowrap; }
button { width: 99px; height: 22px; border-radius: 2px; background: #1a73e0; color: #fff; font-weight: bold; white-space: nowrap; }
a { color: #3a72c4; margin-left: 7px; }
`, () => `<i class="grip"></i><span class="msg">meet.google.com має доступ до вашого екрана.</span><button>Більше не ділитися</button><a href="#">Сховати</a>`);
</script>
</body>
</html>
